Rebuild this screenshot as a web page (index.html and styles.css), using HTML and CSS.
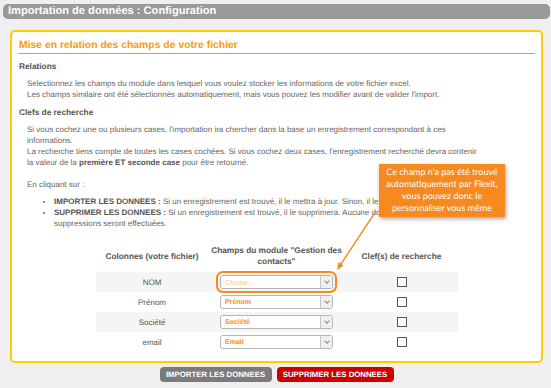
FILE: index.html
```html
<!DOCTYPE html>
<html lang="fr">
<head>
<meta charset="utf-8">
<title>Importation de données : Configuration</title>
<link rel="stylesheet" href="styles.css">
</head>
<body>
<div class="topbar">Importation de données : Configuration</div>
<div class="panel">
  <h2 class="title">Mise en relation des champs de votre fichier</h2>
  <h3 class="sub">Relations</h3>
  <p class="para">Selectionnez les champs du module dans lesquel vous voulez stocker les informations de votre fichier excel.<br>Les champs similaire ont été sélectionnés automatiquement, mais vous pouvez les modifier avant de valider l'import.</p>
  <h3 class="sub">Clefs de recherche</h3>
  <p class="para">Si vous cochez une ou plusieurs cases, l'importation ira chercher dans la base un enregistrement correspondant à ces<br>informations.<br>La recherche tiens compte de toutes les cases cochées. Si vous cochez deux cases, l'enregistrement recherché devra contenir<br>la valeur de la <b>première ET seconde case</b> pour être retourné.<br><br>En cliquant sur :</p>
  <ul class="list">
    <li><b>IMPORTER LES DONNEES :</b> Si un enregistrement est trouvé, il le mettra à jour. Sinon, il le créera automatiquement.</li>
    <li><b>SUPPRIMER LES DONNEES :</b> Si un enregistrement est trouvé, il le supprimera. Aucune donnée ne sera importée, seules<br>suppressions seront effectuées.</li>
  </ul>
  <table class="map">
    <thead>
      <tr><th class="c1">Colonnes (votre fichier)</th><th class="c2">Champs du module "Gestion des contacts"</th><th class="c3">Clef(s) de recherche</th></tr>
    </thead>
    <tbody>
      <tr class="alt"><td>NOM</td><td><div class="box empty hl"><span>Choisir...</span><i class="arr"></i></div></td><td><span class="chk"></span></td></tr>
      <tr><td>Prénom</td><td><div class="box"><span>Prénom</span><i class="arr"></i></div></td><td><span class="chk"></span></td></tr>
      <tr class="alt"><td>Société</td><td><div class="box"><span>Société</span><i class="arr"></i></div></td><td><span class="chk"></span></td></tr>
      <tr><td>email</td><td><div class="box"><span>Email</span><i class="arr"></i></div></td><td><span class="chk"></span></td></tr>
    </tbody>
  </table>
  <div class="tip">Ce champ n'a pas été trouvé automatiquement par Flexit, vous pouvez donc le personnaliser vous même</div>
  <svg class="pointer" width="60" height="70" viewBox="0 0 60 70">
    <line x1="46" y1="6" x2="9" y2="62" stroke="#f7891f" stroke-width="1.4"/>
    <path d="M7 65 L8.5 57 L13.5 60.5 Z" fill="#f7891f"/>
  </svg>
</div>
<div class="actions">
  <button class="btn gray">IMPORTER LES DONNEES</button>
  <button class="btn red">SUPPRIMER LES DONNEES</button>
</div>
</body>
</html>
```
FILE: styles.css
```css
html, body {
  margin: 0;
  padding: 0;
  background: #efefef;
  font-family: "Liberation Sans", Arial, sans-serif;
  color: #555;
  text-rendering: geometricPrecision;
}
body {
  width: 551px;
  height: 388px;
  overflow: hidden;
}
.topbar {
  margin: 4px 1px 0 3px;
  height: 15px;
  line-height: 15px;
  background: #999;
  border-radius: 5px;
  color: #fff;
  font-weight: bold;
  font-size: 11.1px;
  padding-left: 5px;
}
.panel {
  position: relative;
  margin: 11px 8px 0 10px;
  background: #fff;
  border: 2px solid #fc0;
  border-radius: 5px;
  padding: 7px 6px 0 6px;
  box-sizing: border-box;
  height: 333px;
}
.title {
  margin: 0;
  padding: 0 1px;
  font-size: 10.4px;
  line-height: 14px;
  color: #f90;
  border-bottom: 1px solid #f90;
}
.sub {
  margin: 7px 0 0 1px;
  font-size: 8.3px;
  line-height: 11px;
  font-weight: bold;
  color: #555;
}
.para {
  margin: 6px 0 0 9px;
  font-size: 8px;
  line-height: 11px;
  color: #666;
}
.para b { color: #555; }
.list {
  margin: 6px 0 0 0;
  padding-left: 36px;
  padding-right: 0;
  font-size: 8px;
  line-height: 11px;
  color: #666;
}
.list b { color: #555; }
.map {
  margin: 11px 0 0 78px;
  border-collapse: collapse;
  width: 362px;
  font-size: 8px;
  color: #555;
}
.map th {
  font-weight: bold;
  font-size: 8.3px;
  padding: 5px 0;
  line-height: 11px;
  height: 22px;
  vertical-align: middle;
}
.c1 { width: 112px; }
.c2 { width: 137px; }
.c3 { width: 113px; }
.map td {
  height: 20px;
  padding: 0;
  text-align: center;
  vertical-align: middle;
}
.map tr.alt td { background: #f5f5f5; }
.box {
  display: inline-flex;
  vertical-align: middle;
  width: 113px;
  height: 14px;
  box-sizing: border-box;
  border: 1px solid #b5b5b5;
  border-radius: 3px;
  background: #fff;
  align-items: center;
  text-align: left;
}
.box.hl {
  outline: 2px solid #f7891f;
  outline-offset: 2px;
}
.box span {
  flex: 1;
  padding-left: 4px;
  font-size: 7px;
  font-weight: bold;
  color: #f7891f;
}
.box.empty span { color: #fbc48e; font-weight: normal; font-size: 7.3px; }
.arr {
  width: 12px;
  height: 12px;
  box-sizing: border-box;
  border-left: 1px solid #c8c8c8;
  background: #f0f0f0;
  border-radius: 0 2px 2px 0;
  position: relative;
}
.arr::after {
  content: "";
  position: absolute;
  left: 4px;
  top: 3px;
  width: 3px;
  height: 3px;
  border-right: 1px solid #888;
  border-bottom: 1px solid #888;
  transform: rotate(45deg);
}
.chk {
  display: inline-block;
  width: 10px;
  height: 10px;
  box-sizing: border-box;
  border: 1px solid #555;
  background: #fff;
  vertical-align: middle;
}
.tip {
  position: absolute;
  left: 367px;
  top: 132px;
  width: 126px;
  box-sizing: border-box;
  padding: 2px 3px 3px;
  background: #f7891f;
  color: #fff;
  font-family: Lato, "Open Sans", sans-serif;
  font-size: 9px;
  line-height: 12px;
  text-align: center;
  box-shadow: 1px 2px 4px rgba(0,0,0,0.35);
}
.pointer {
  position: absolute;
  left: 318px;
  top: 173px;
}
.actions {
  display: flex;
  justify-content: center;
  gap: 5px;
  margin-top: 4px;
  padding-left: 2px;
}
.btn {
  border: 0;
  border-radius: 4px;
  height: 15px;
  padding: 0;
  color: #fff;
  font-family: "Liberation Sans", Arial, sans-serif;
  font-weight: bold;
  font-size: 7.8px;
  line-height: 15px;
  white-space: nowrap;
  text-rendering: geometricPrecision;
}
.btn.gray { background: #7b7b7b; width: 112px; }
.btn.red { background: #cc0000; width: 117px; }
```
